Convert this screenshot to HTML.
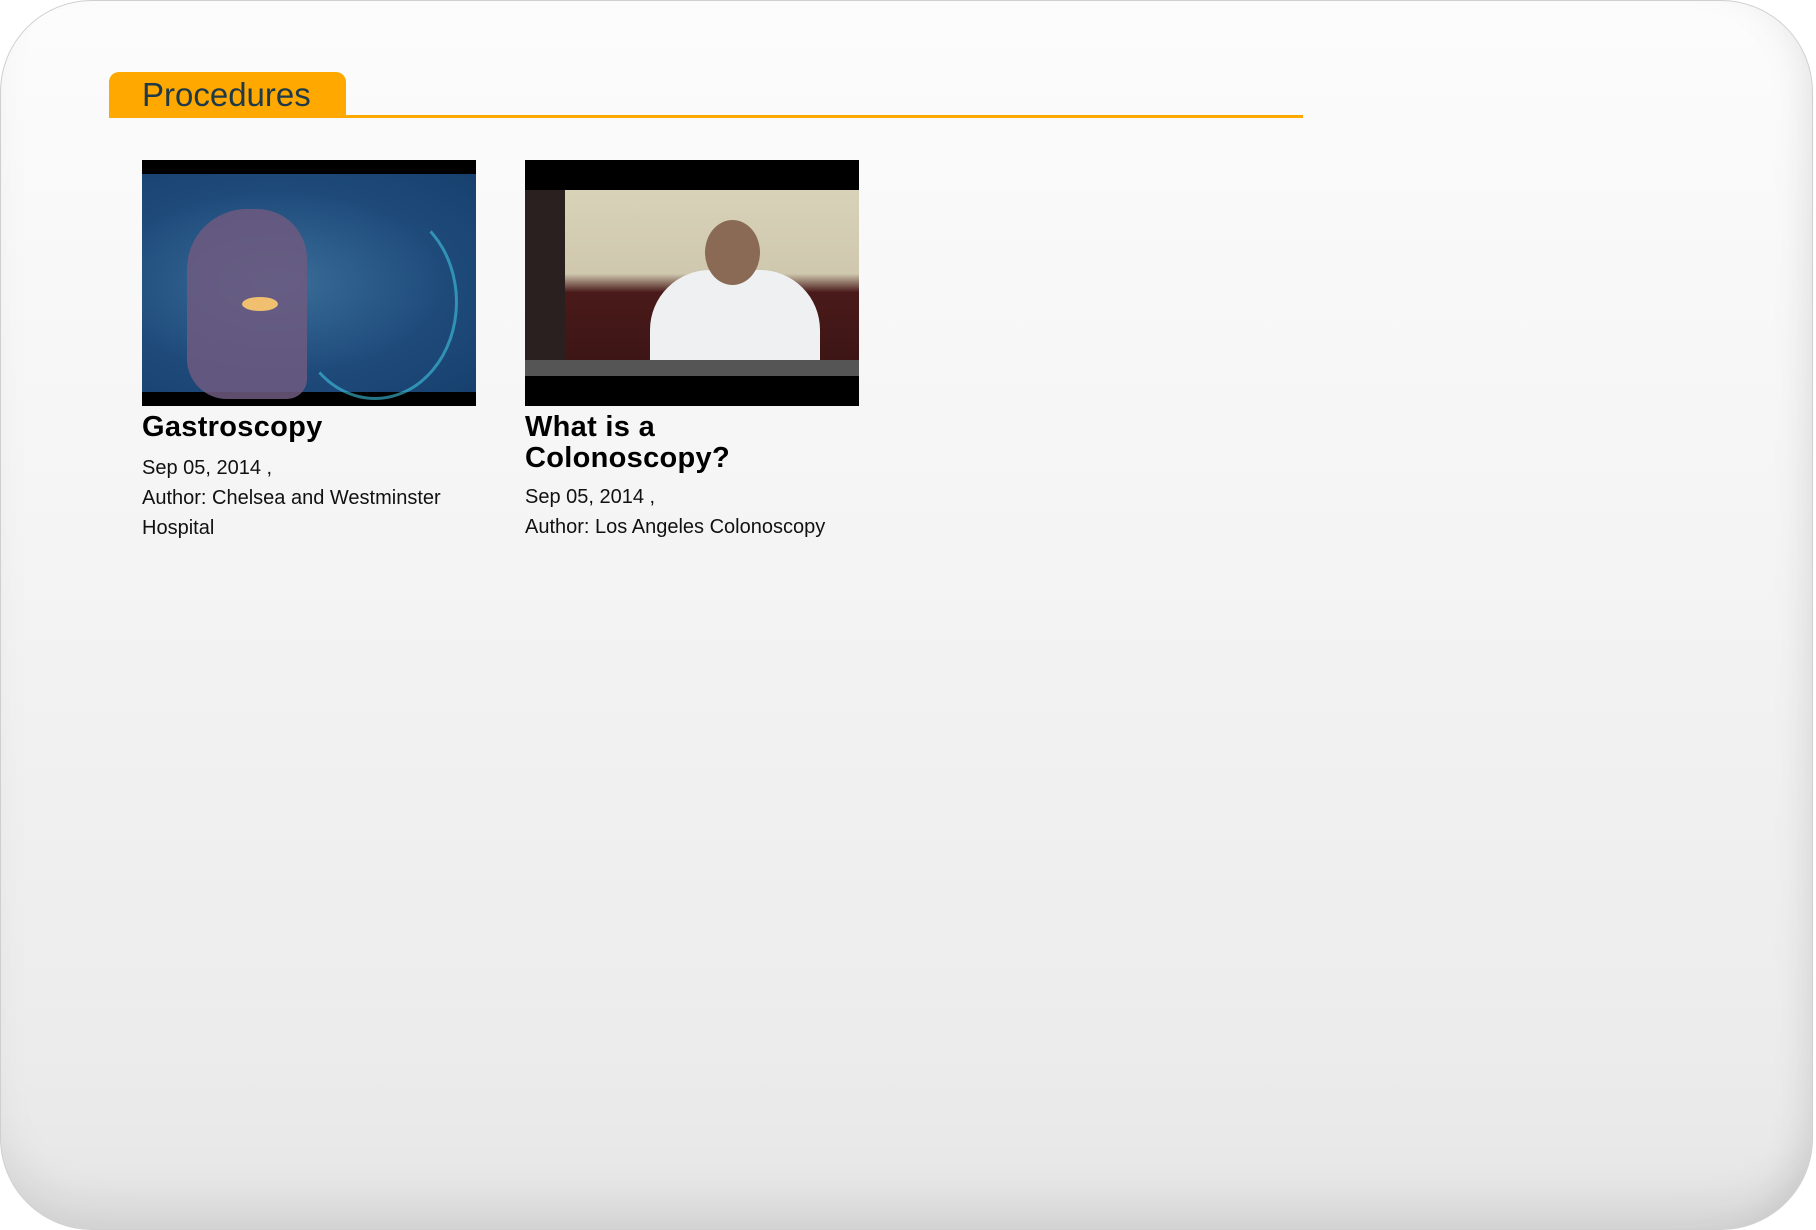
<!DOCTYPE html>
<html><head><meta charset="utf-8"><style>
html,body{margin:0;padding:0;width:1816px;height:1216px;overflow:hidden;background:#fff;font-family:"Liberation Sans",Arial,sans-serif}
.panel{position:absolute;left:0;top:0;width:1813px;height:1230px;border:1px solid #cfcfcf;border-radius:92px;box-sizing:border-box;
background:linear-gradient(#fcfcfd 0%,#f5f5f5 40%,#ececec 85%,#e6e6e6 100%);box-shadow:inset 0 -40px 50px -20px rgba(0,0,0,.1),inset -30px 0 40px -25px rgba(0,0,0,.08)}
.tab{position:absolute;left:109px;top:72px;width:237px;height:45px;background:#ffa800;border-radius:10px 10px 0 0;color:#1e3a48;font-size:33px;line-height:46px;padding-left:33px;box-sizing:border-box}
.line{position:absolute;left:109px;top:115px;width:1194px;height:3px;background:#ffa800}
.thumb{position:absolute;top:160px;width:334px;height:246px;background:#000;overflow:hidden}
.t1{left:142px}.t2{left:525px}
.title{position:absolute;font-weight:bold;font-size:29px;line-height:31px;color:#000;letter-spacing:.3px}
.meta{position:absolute;font-size:20px;line-height:30px;color:#111}
</style></head><body>
<div class="panel"></div>
<div class="tab">Procedures</div>
<div class="line"></div>
<div class="thumb t1"><div style="position:absolute;left:0;top:14px;width:334px;height:218px;background:radial-gradient(ellipse at 40% 50%,#3b6f9a,#1e4a7a 60%,#17406e)">
<div style="position:absolute;left:45px;top:35px;width:120px;height:190px;border-radius:60px 50px 20px 40px;background:#6e5a80;opacity:.85"></div>
<div style="position:absolute;left:150px;top:30px;width:160px;height:190px;border:3px solid #3fc4e0;border-radius:50%;border-left-color:transparent;border-top-color:transparent;opacity:.6"></div>
<div style="position:absolute;left:100px;top:123px;width:36px;height:14px;border-radius:50%;background:#f0c070"></div></div></div>
<div class="thumb t2"><div style="position:absolute;left:0;top:30px;width:334px;height:186px;background:linear-gradient(#d8d2b8 0%,#cfc8ae 45%,#4a1a1a 55%,#3a1414 100%)">
<div style="position:absolute;left:0;top:0;width:40px;height:186px;background:#2a2020"></div>
<div style="position:absolute;left:125px;top:80px;width:170px;height:106px;border-radius:60px 60px 0 0;background:#eef0f2"></div>
<div style="position:absolute;left:180px;top:30px;width:55px;height:65px;border-radius:50%;background:#8a6a55"></div>
<div style="position:absolute;left:0;top:170px;width:334px;height:16px;background:#555"></div></div></div>
<div class="title" style="left:142px;top:412px">Gastroscopy</div>
<div class="meta" style="left:142px;top:453px">Sep 05, 2014 ,<br>Author: Chelsea and Westminster<br>Hospital</div>
<div class="title" style="left:525px;top:412px">What is a<br>Colonoscopy?</div>
<div class="meta" style="left:525px;top:482px">Sep 05, 2014 ,<br>Author: Los Angeles Colonoscopy</div>
</body></html>
